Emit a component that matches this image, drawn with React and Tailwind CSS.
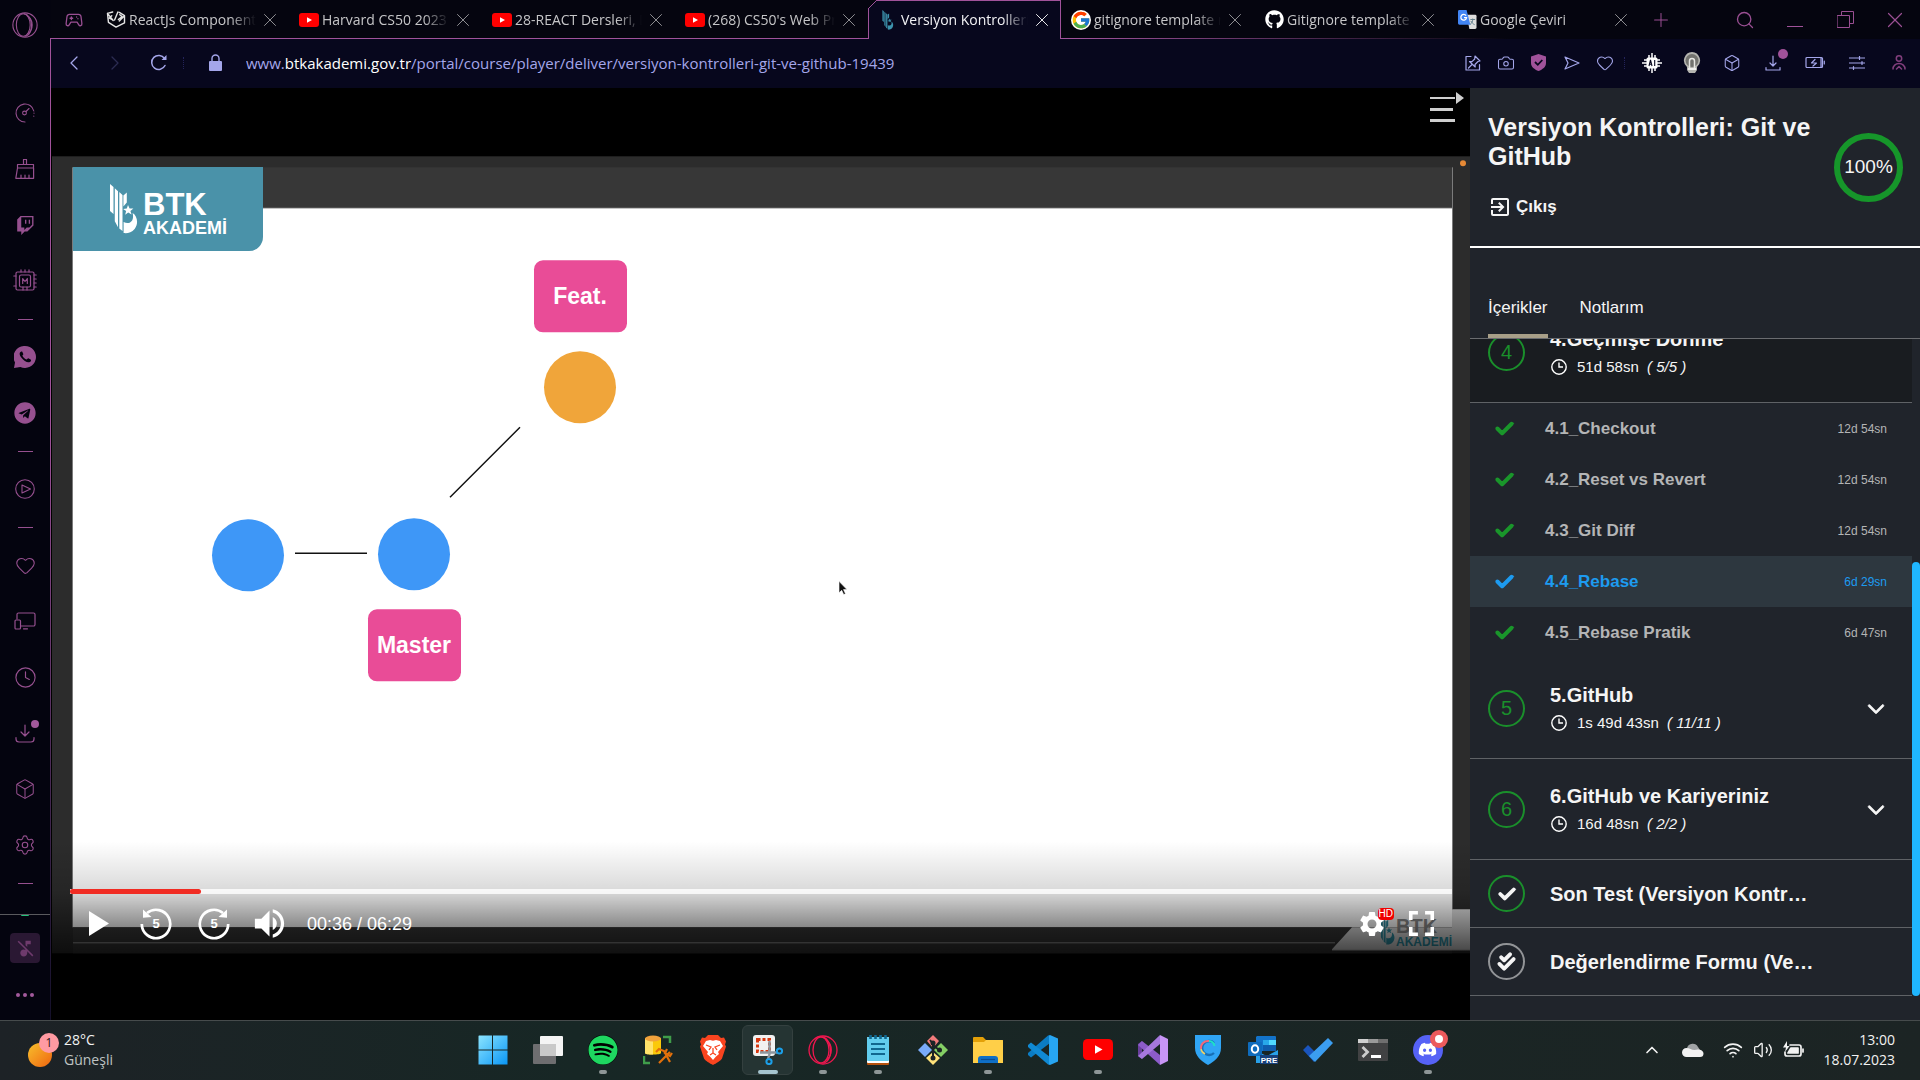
import React from "react";
import { Search, Heart, Clock, Box, Settings, Camera, SendHorizontal, X, Plus, ChevronLeft, ChevronRight, ChevronUp, Wifi, Volume2 } from "lucide-react";
import { FaSpotify, FaTelegram, FaGithub, FaDiscord } from "react-icons/fa";
import { FaCheck, FaCheckDouble, FaChevronDown } from "react-icons/fa6";
import { FcGoogle } from "react-icons/fc";
import { BsTwitch } from "react-icons/bs";
import { MdVolumeUp, MdSettings, MdFullscreen, MdExitToApp, MdMusicOff } from "react-icons/md";

const line = { fill: "none", stroke: "currentColor", strokeLinecap: "round", strokeLinejoin: "round" };

/* ---------- shared marks ---------- */

function YoutubeMark({ className }) {
  return (
    <svg viewBox="0 0 30 21" className={className} aria-hidden="true">
      <rect width="30" height="21" rx="4.5" fill="#ff0000" />
      <path d="M12 6.2v8.6l7.5-4.3z" fill="#fff" />
    </svg>
  );
}

function OperaMark({ className }) {
  return (
    <svg viewBox="0 0 30 30" className={className} {...line} strokeWidth="1.3" aria-hidden="true">
      <circle cx="15" cy="15" r="14" />
      <ellipse cx="13" cy="15" rx="8" ry="13" />
      <path d="M18 5c7 4 7 16 0 20" />
      <path d="M14 2c10 1 12 23 2 26" />
    </svg>
  );
}

function BirdMark({ className }) {
  return (
    <svg viewBox="0 0 28 50" className={className} fill="currentColor" aria-hidden="true">
      <path d="M0 0l3.500 3v27L0 27zM4.800 4.200l3.200 3v36l-3.200-6zM9.300 8l3.200 3v36l-3.200-2.600zM13.400 11.500l3.400-3v10l-3.400 4z" />
      <path d="M18 21l1.600 3.400 3.800.2-3 2.300 1.200 3.700-3.400-2-3 2.200.9-3.700-3-2.200 3.700-.3z" />
      <path d="M13.600 38c6 3 11-1 9-9 5 3 6 11 2 16-3 4-8 4.500-11 4z" />
    </svg>
  );
}

/* ---------- browser sidebar ---------- */

function GaugeIcon() {
  return (
    <svg viewBox="0 0 20 20" className="size-5" {...line} strokeWidth="1.100">
      <path d="M10 19a9 9 0 1 1 8.800-11" />
      <path d="M19 10v.2M18.800 13v.2" />
      <circle cx="9.500" cy="10" r="1.900" />
      <path d="M11 8.500l3-3" />
    </svg>
  );
}
function BrushIcon() {
  return (
    <svg viewBox="0 0 20 20" className="size-5" {...line} strokeWidth="1.200">
      <path d="M8.500 5.500v-5h3v5M2.500 5.500h16v3.500h-16zM2.500 9L.800 19.300h17.800V9M6 19v-3M10 19v-3M14 19v-3" />
    </svg>
  );
}
function CpuIcon() {
  return (
    <svg viewBox="0 0 24 24" className="size-6" {...line} strokeWidth="1.200">
      <rect x="3" y="3" width="18" height="18" rx="1.500" />
      <rect x="6.500" y="6" width="11" height="12" rx="1.500" />
      <path d="M9.700 14.500v-5l2.300 3 2.300-3v5M8 .8V3M12 .8V3M16 .8V3M21 6h2.200M21 10h2.200M21 14h2.200M21 18h2.200M.8 7H3M.8 17H3M10 18v3M14 18v3" />
    </svg>
  );
}
function WhatsappIcon() {
  return (
    <svg viewBox="0 0 22 22" className="size-[22px]">
      <path d="M11 0a11 11 0 1 1-4.600 21L0 22l1-5.500A11 11 0 0 1 11 0z" fill="currentColor" />
      <path d="M7.300 5.600c-2.400 1-2 3.600.2 6.200 2.300 2.900 5.800 5.300 8.300 4.300 1.600-.7 1.500-2.300.8-2.700l-2.300-1.100c-.5-.2-1.100 1.300-1.700 1.200-1.800-.6-3.400-2.100-4.200-3.800 0-.6 1.100-1 .9-1.700l-.9-2.100c-.2-.4-.8-.4-1.100-.3z" fill="#04040f" />
    </svg>
  );
}
function PlayCircleIcon() {
  return (
    <svg viewBox="0 0 20 20" className="size-5" {...line} strokeWidth="1.100">
      <circle cx="10" cy="10" r="9.300" />
      <path d="M7 6v8l8.500-4z" />
    </svg>
  );
}
function DevicesIcon() {
  return (
    <svg viewBox="0 0 22 18" className="h-[18px] w-[22px]" {...line} strokeWidth="1.200">
      <path d="M3 7V2.500A1.500 1.500 0 0 1 4.500 1h15A1.500 1.500 0 0 1 21 2.500v10a1.500 1.500 0 0 1-1.500 1.500H7M9.500 16.800h4" />
      <rect x="1" y="8" width="5.500" height="9" rx="1" />
    </svg>
  );
}
function DownloadIcon() {
  return (
    <svg viewBox="0 0 20 20" className="size-5" {...line} strokeWidth="1.200">
      <path d="M10 2v11M6 9l4 4 4-4M1 14.500v1.500a3 3 0 0 0 3 3h12a3 3 0 0 0 3-3v-1.500" />
    </svg>
  );
}

const railItems = [
  ["Performans", <GaugeIcon />],
  ["GX Cleaner", <BrushIcon />],
  ["Twitch", <BsTwitch className="size-[19px]" />],
  ["GX Control", <CpuIcon />],
  null,
  ["WhatsApp", <WhatsappIcon />],
  ["Telegram", <FaTelegram className="size-[22px]" />],
  null,
  ["Oynatıcı", <PlayCircleIcon />],
  null,
  ["Favoriler", <Heart className="size-[21px]" strokeWidth={1.2} />],
  ["Cihazlar", <DevicesIcon />],
  ["Geçmiş", <Clock className="size-[23px]" strokeWidth={1.2} />],
  ["İndirilenler", <DownloadIcon />, true],
  ["Uzantılar", <Box className="size-[22px]" strokeWidth={1.1} />],
  ["Ayarlar", <Settings className="size-[22px]" strokeWidth={1.2} />],
  null,
];

function Rail() {
  return (
    <aside className="flex w-[51px] shrink-0 bg-[#04040f] text-[#96508f]">
      <div className="flex min-w-0 flex-1 flex-col">
        <button aria-label="Opera menüsü" className="flex h-[50px] shrink-0 items-center justify-center">
          <OperaMark className="size-[26px]" />
        </button>
        <nav className="mt-[35px] flex flex-col">
          {railItems.map((item, i) =>
            item ? (
              <button key={i} aria-label={item[0]} className="relative flex h-14 items-center justify-center">
                {item[1]}
                {item[2] && <span className="absolute top-[15px] right-[11px] size-2 rounded-full bg-[#a35a9c]" />}
              </button>
            ) : (
              <span key={i} className="flex h-5 items-center justify-center">
                <span className="h-px w-[15px] bg-[#96508f]" />
              </span>
            )
          )}
        </nav>
        <div className="mt-[21px] flex justify-center border-t border-[#5a5a5e]">
          <span className="h-px w-2 rounded-b bg-[#22c07a]" />
        </div>
        <div className="flex flex-col items-center gap-[18px] pt-[17px]">
          <button aria-label="Müzik kapalı" className="flex size-[30px] items-center justify-center rounded bg-[#2a1833] text-[#6e3a6c]">
            <MdMusicOff className="size-[21px]" />
          </button>
          <button aria-label="Diğer" className="flex h-7 items-center gap-[3px]">
            <span className="size-1 rounded-full bg-[#a35a9c]" />
            <span className="size-1 rounded-full bg-[#a35a9c]" />
            <span className="size-1 rounded-full bg-[#a35a9c]" />
          </button>
        </div>
      </div>
      <div className="mt-[38px] w-px bg-linear-to-b from-[#a0529a] from-40% to-[#14102a]" />
    </aside>
  );
}

/* ---------- tab strip ---------- */

function CodeCubeIcon() {
  return (
    <svg viewBox="0 0 20 18" className="h-[17px] w-5 text-neutral-200" {...line} strokeWidth="1.500">
      <path d="M6.500 1L1 2.500l1 9.500 8 5 9-4.500V5l-5.500-3.500M1 2.500L7 10M19 5l-5.500 5.500M12 1L8.500 9.500M5.500 5L3 7.500l3.500 2M14 4l2.500 2-4 3" />
    </svg>
  );
}
function TranslateIcon() {
  return (
    <svg viewBox="0 0 20 20" className="size-[19px]">
      <path d="M9 5h9a1.500 1.500 0 0 1 1.500 1.500v12A1.500 1.500 0 0 1 18 20h-6z" fill="#dedede" />
      <path d="M13 10h5M15.500 9v1c0 2-1 4-3 5.500M13.500 11.500c.8 1.500 2 3 4 4" stroke="#607d8b" fill="none" />
      <path d="M1.500 0H9l4 15.500H1.500A1.500 1.500 0 0 1 0 14V1.500A1.500 1.500 0 0 1 1.500 0z" fill="#4285f4" />
      <path d="M8.500 6A3 3 0 1 0 9 8H6.300" stroke="#fff" strokeWidth="1.300" fill="none" />
    </svg>
  );
}

const yt = <YoutubeMark className="h-[14px] w-5" />;
const tabs = [
  [<CodeCubeIcon />, "ReactJs Component"],
  [yt, "Harvard CS50 2023 -"],
  [yt, "28-REACT Dersleri, D"],
  [yt, "(268) CS50's Web Pr"],
  [<BirdMark className="h-5 w-3 text-[#3d93ad]" />, "Versiyon Kontrolleri:"],
  [<FcGoogle className="size-5 rounded-full bg-white" />, "gitignore template r"],
  [<FaGithub className="size-[19px] text-white" />, "Gitignore template r"],
  [<TranslateIcon />, "Google Çeviri"],
];

function TabStrip() {
  return (
    <header className="relative flex h-[39px] shrink-0 bg-[#05050f] text-[#9a4f93]">
      <div className="absolute inset-x-0 bottom-0 h-px bg-linear-to-r from-[#a0529a] from-55% to-transparent to-78%" />
      <button aria-label="GX Corner" className="flex w-[45px] shrink-0 items-center justify-center">
        <svg viewBox="0 0 20 16" className="h-[14px] w-[18px]" {...line} strokeWidth="1.500">
          <path d="M5 1.500h10a3 3 0 0 1 3 2.500l1 8c.2 3-2.500 3.200-3.500 1.500L13.500 10.500h-7L4.500 13.500C3.500 15.200.8 15 1 12l1-8a3 3 0 0 1 3-2.500zM7 4.500v3M5.500 6h3M13 4.500v.2M14.500 6.500v.2" />
        </svg>
      </button>
      <div role="tablist" className="flex min-w-0">
        {tabs.map(([icon, label], i) => {
          const active = i === 4;
          return (
            <div
              key={label}
              className={
                active
                  ? "relative flex w-[193px] items-center border-x border-t border-[#a0529a] bg-[#07071d] pr-[9px] pl-[9px] text-[#f2f2f5]"
                  : "flex w-[193px] items-center px-[10px] text-[#c6c6c8]"
              }
            >
              {active && (
                <svg viewBox="0 0 9 9" className="absolute -top-px -left-px size-[9px]">
                  <path d="M0 0h9L0 9z" fill="#05050f" />
                  <path d="M0 9L9 0" stroke="#a0529a" />
                </svg>
              )}
              <button role="tab" aria-selected={active} className="flex min-w-0 flex-1 items-center gap-[3px]">
                <span className="flex w-5 shrink-0 justify-center">{icon}</span>
                <span className="w-[127px] overflow-hidden mask-r-from-80% text-left text-sm leading-5 whitespace-nowrap">{label}</span>
              </button>
              <button aria-label="Sekmeyi kapat" className={active ? "flex w-[18px] justify-center text-white" : "flex w-[18px] justify-center text-[#9a9a9e]"}>
                <X className="size-[22px] shrink-0" strokeWidth={1} />
              </button>
            </div>
          );
        })}
      </div>
      <button aria-label="Yeni sekme" className="flex w-[42px] shrink-0 items-center justify-center">
        <Plus className="size-[22px]" strokeWidth={1.1} />
      </button>
      <div className="ml-auto flex">
        <button aria-label="Ara" className="flex w-[50px] items-center justify-center">
          <Search className="size-5" strokeWidth={1.6} />
        </button>
        <button aria-label="Küçült" className="flex w-[50px] items-center justify-center">
          <span className="mt-[14px] h-px w-4 bg-[#a0529a]" />
        </button>
        <button aria-label="Geri yükle" className="flex w-[50px] items-center justify-center">
          <svg viewBox="0 0 17 17" className="size-[17px]" {...line} strokeWidth="1">
            <path d="M.5 4.500h12v12H.5zM4.500 4.500v-4h12v12h-4" />
          </svg>
        </button>
        <button aria-label="Kapat" className="flex w-[50px] items-center justify-center">
          <X className="size-[26px]" strokeWidth={1.1} />
        </button>
      </div>
    </header>
  );
}

/* ---------- address bar ---------- */

function PinIcon() {
  return (
    <svg viewBox="0 0 16 16" className="size-4" {...line} strokeWidth="1.200">
      <path d="M6 1.500H1V15h13.500V9.500M10 1l5 5-2 .5-3 3 .2 2.500L4.500 6.500 7 6.600 9.700 4zM7 9.500L3.500 13" />
    </svg>
  );
}
function ShieldIcon() {
  return (
    <svg viewBox="0 0 15 17" className="h-[17px] w-[15px]">
      <path d="M7.500 0L15 2.500V9c0 4-3.500 6.500-7.500 8C3.500 15.500 0 13 0 9V2.500z" fill="#a0529a" />
      <path d="M4 8l2.800 2.800L11.300 6" stroke="#07071d" strokeWidth="1.800" fill="none" />
    </svg>
  );
}
function SendIcon() {
  return (
    <svg viewBox="0 0 16 14" className="h-[14px] w-4" {...line} strokeWidth="1.200">
      <path d="M1 1l14 6-14 6 3-6z" />
    </svg>
  );
}
function AiChipIcon() {
  return (
    <svg viewBox="0 0 20 20" className="size-5">
      <path d="M10 0v20M7 2v16M13 2v16M0 10h20M2 7h16M2 13h16" stroke="#fff" strokeWidth="1.500" />
      <rect x="4.500" y="4.500" width="11" height="11" rx="1.500" fill="#fff" />
      <path d="M7 13l1.500-6L10 13M7.500 11.300h2M12.700 7v6" stroke="#07071d" fill="none" strokeWidth="1.100" />
    </svg>
  );
}
function BulbIcon() {
  return (
    <svg viewBox="0 0 18 21" className="h-[21px] w-[18px]">
      <path d="M9 0a8.500 8.500 0 0 1 5 15v3l-2 3H6l-2-3v-3A8.500 8.500 0 0 1 9 0z" fill="#b5b5b0" />
      <circle cx="9" cy="8.500" r="6.500" fill="#73736f" />
      <path d="M6.500 16V9a2.500 2.500 0 0 1 5 0v7" fill="none" stroke="#e8e8e4" strokeWidth="1.500" />
      <path d="M5 16h8v2H5z" fill="#efefec" />
    </svg>
  );
}
function TrayDownloadIcon() {
  return (
    <svg viewBox="0 0 16 16" className="size-4" {...line} strokeWidth="1.200">
      <path d="M8 1v10M5 8l3 3 3-3M1 12.500V15h14v-2.500" />
    </svg>
  );
}
function BatteryBoltIcon() {
  return (
    <svg viewBox="0 0 20 12" className="h-[13px] w-5" {...line} strokeWidth="1.200">
      <path d="M2 1h14v10H2a1 1 0 0 1-1-1V2a1 1 0 0 1 1-1zM16 1h.5a1 1 0 0 1 1 1v8a1 1 0 0 1-1 1H16M19.300 4.500v3M10 3L6.500 6.500h5L8 9.500" />
    </svg>
  );
}
function SlidersIcon() {
  return (
    <svg viewBox="0 0 16 14" className="h-[14px] w-4" {...line} strokeWidth="1.200">
      <path d="M0 2h16M0 7h16M0 12h16M10.500.5v3M13 5.500v3M4.500 10.500v3" />
    </svg>
  );
}
function UserIcon() {
  return (
    <svg viewBox="0 0 14 15" className="h-[15px] w-[14px] text-[#823f7d]" {...line} strokeWidth="1.500">
      <circle cx="7" cy="3.500" r="2.700" />
      <path d="M1 14c0-3 2.500-5.500 6-5.500s6 2.500 6 5.500M4.500 14l2.500-2.500L9.500 14" />
    </svg>
  );
}

const pageTools = [
  ["Sabitle", <PinIcon />],
  ["Ekran görüntüsü", <Camera className="size-[18px]" strokeWidth={1.4} />],
  ["Reklam engelleyici", <ShieldIcon />],
  ["Gönder", <SendIcon />],
  ["Beğen", <Heart className="size-[18px]" strokeWidth={1.4} />],
];
const extensions = [
  ["AI", <AiChipIcon />],
  ["Işıkları kapat", <BulbIcon />],
  ["Uzantılar", <Box className="size-[18px]" strokeWidth={1.4} />],
];
const browserTools = [
  ["İndirme", <TrayDownloadIcon />, true],
  ["Pil tasarrufu", <BatteryBoltIcon />],
  ["Kolay kurulum", <SlidersIcon />],
  ["Profil", <UserIcon />],
];

function AddressBar() {
  return (
    <div className="flex h-[49px] shrink-0 items-center bg-[#07071d] pb-[2px] text-[#a4a6ea]">
      <button aria-label="Geri" className="flex w-[46px] justify-center">
        <ChevronLeft className="size-6" strokeWidth={1.3} />
      </button>
      <button aria-label="İleri" className="flex w-9 justify-center text-[#2b2b52]">
        <ChevronRight className="size-6" strokeWidth={1.3} />
      </button>
      <button aria-label="Yenile" className="flex w-[50px] justify-center">
        <svg viewBox="0 0 17 17" className="size-[17px]" {...line} strokeWidth="1.500">
          <path d="M15 11.500a7 7 0 1 1-.5-7" />
          <path d="M16.500 1v5h-5z" fill="currentColor" stroke="none" />
        </svg>
      </button>
      <span className="h-3 w-px border-l border-dotted border-[#23235a]" />
      <button aria-label="Site bilgisi" className="flex w-[62px] justify-center">
        <svg viewBox="0 0 13 17" className="h-[17px] w-[13px]">
          <rect y="7" width="13" height="10" rx="1" fill="currentColor" />
          <path d="M3 7V4.500a3.500 3.500 0 0 1 7 0V7" stroke="currentColor" strokeWidth="1.400" fill="none" />
        </svg>
      </button>
      <button className="min-w-0 flex-1 truncate text-left text-[15px] leading-6">
        www.<span className="text-white">btkakademi.gov.tr</span>/portal/course/player/deliver/versiyon-kontrolleri-git-ve-github-19439
      </button>
      {pageTools.map(([name, icon]) => (
        <button key={name} aria-label={name} className="flex w-[33px] justify-center">
          {icon}
        </button>
      ))}
      <span className="mr-[7px] ml-[3px] h-3 w-px border-l border-dotted border-[#23235a]" />
      {extensions.map(([name, icon]) => (
        <button key={name} aria-label={name} className="flex w-10 justify-center">
          {icon}
        </button>
      ))}
      {browserTools.map(([name, icon, dot]) => (
        <button key={name} aria-label={name} className="relative flex w-[42px] justify-center">
          {icon}
          {dot && <span className="absolute -top-[6px] right-[6px] size-[10px] rounded-full bg-[#a0529a]" />}
        </button>
      ))}
    </div>
  );
}

/* ---------- video ---------- */

function Slide() {
  return (
    <svg viewBox="0 0 1418 797" className="absolute inset-0 size-full" fontFamily="'Liberation Sans', Arial, sans-serif" fontWeight="700">
      <rect width="1418" height="797" fill="#2c2c2c" />
      <rect x="21" y="11" width="1379" height="42" fill="#373737" />
      <rect x="21" y="51" width="1379" height="1" fill="#5a5a5a" />
      <rect x="21" y="52" width="1379" height="719" fill="#fff" />
      <rect x="21" y="771" width="1379" height="26" fill="#363636" />
      <path d="M20.500 11v760M1400.500 11v742" stroke="#7b7b7b" />
      <path d="M21 786.500h1262" stroke="#a0a0a0" />
      <path d="M1280 793l20-22h100v-18h18v40z" fill="#dcdcdc" />
      <path d="M1280 793.500h138" stroke="#fff" />
      <circle cx="1411" cy="7" r="3" fill="#e88a35" />
      <circle cx="196" cy="399" r="36" fill="#3e97f7" />
      <circle cx="362" cy="398" r="36" fill="#3e97f7" />
      <circle cx="528" cy="231" r="36" fill="#f0a53a" />
      <path d="M243 397h72M398 341l70-70" stroke="#111" strokeWidth="1.500" />
      <rect x="482" y="104" width="93" height="72" rx="9" fill="#e94c97" />
      <rect x="316" y="453" width="93" height="72" rx="9" fill="#e94c97" />
      <text x="528" y="148" fontSize="23" fill="#fff" textAnchor="middle">Feat.</text>
      <text x="362" y="497" fontSize="23" fill="#fff" textAnchor="middle">Master</text>
      <path d="M787 425v11.500l2.700-2.500 2 4.300 1.800-.8-2-4.200h3.500z" fill="#111" stroke="#fff" strokeWidth=".6" />
      <svg x="1326" y="757" width="17" height="33" viewBox="0 0 28 50" color="#2d8fa3">
        <BirdMark />
      </svg>
      <text x="1344" y="777" fontSize="20" fill="#8a8a8a">BTK</text>
      <text x="1344" y="790" fontSize="12" fill="#2d8fa3">AKADEMİ</text>
    </svg>
  );
}

function SkipIcon({ forward }) {
  return (
    <svg viewBox="0 0 32 32" className="size-8">
      <g transform={forward ? "translate(32 0) scale(-1 1)" : undefined}>
        <path d="M1.800 16A14.200 14.200 0 1 0 7 5" fill="none" stroke="#fff" strokeWidth="2.700" />
        <path d="M3 1.500l8.500 7.500-8.500.8z" fill="#fff" />
      </g>
      <text x="16" y="20" textAnchor="middle" fontSize="13" fontWeight="700" fontFamily="'Liberation Sans', sans-serif" fill="#fff">5</text>
    </svg>
  );
}

function Player() {
  return (
    <main className="relative flex min-w-0 flex-1 flex-col justify-center bg-black pt-[2px] pl-px">
      <button aria-label="Menüyü gizle" className="absolute top-1 right-[6px]">
        <svg viewBox="0 0 34 30" className="h-[30px] w-[34px]" fill="#cfcfcf">
          <path d="M0 5h25v2H0zM0 16h23v3H0zM0 27h25v3H0zM26 0l8 6-8 6z" />
        </svg>
      </button>
      <section aria-label="Video" className="relative aspect-video w-full font-['Liberation_Sans',Arial,sans-serif] text-white">
        <Slide />
        <div className="absolute top-[11px] left-[21px] flex h-[84px] w-[190px] items-center gap-[5px] rounded-br-[14px] bg-[#4a92a9] pl-[37px] font-bold">
          <BirdMark className="h-[50px] w-[28px]" />
          <div className="pt-[12px]">
            <div className="text-[31px] leading-[26px]">BTK</div>
            <div className="text-[18px] leading-5">AKADEMİ</div>
          </div>
        </div>
        <div className="absolute inset-x-0 bottom-0 bg-linear-to-b from-transparent from-10% via-black/15 via-50% to-black/70 pt-[60px]">
          <div className="relative mx-[18px] h-[5px] bg-white/80">
            <div className="h-full w-[131px] rounded-full bg-[#f12c23]" />
            <input type="range" aria-label="İlerleme" min="0" max="389" defaultValue="36" className="absolute inset-0 size-full cursor-pointer opacity-0" />
          </div>
          <div className="flex h-[60px] items-center pr-[27px] pl-[37px]">
            <button aria-label="Oynat">
              <svg viewBox="0 0 20 25" className="h-[25px] w-5"><path d="M0 0l20 12.500L0 25z" fill="#fff" /></svg>
            </button>
            <button aria-label="5 saniye geri" className="ml-[31px]"><SkipIcon /></button>
            <button aria-label="5 saniye ileri" className="ml-[26px]"><SkipIcon forward /></button>
            <button aria-label="Ses" className="ml-5"><MdVolumeUp className="size-[39px]" /></button>
            <span className="ml-[18px] text-[18px] leading-6">00:36 / 06:29</span>
            <div className="ml-auto flex items-center">
              <button aria-label="Kalite" className="relative">
                <MdSettings className="size-[30px]" />
                <span className="absolute -top-px right-[-7px] flex h-3 items-center rounded-sm bg-[#f00000] px-px text-[10px] leading-3">HD</span>
              </button>
              <button aria-label="Tam ekran" className="ml-[13px]"><MdFullscreen className="size-[43px]" /></button>
            </div>
          </div>
        </div>
      </section>
    </main>
  );
}

/* ---------- course panel ---------- */

const lessons = [
  ["4.1_Checkout", "12d 54sn"],
  ["4.2_Reset vs Revert", "12d 54sn"],
  ["4.3_Git Diff", "12d 54sn"],
  ["4.4_Rebase", "6d 29sn", true],
  ["4.5_Rebase Pratik", "6d 47sn"],
];

function ClockIcon() {
  return (
    <svg viewBox="0 0 16 16" className="size-4" fill="none" stroke="#fff" strokeWidth="1.400">
      <circle cx="8" cy="8" r="7.200" />
      <path d="M8 3.500V8h4" />
    </svg>
  );
}

function Chapter({ n, title, time, count, open }) {
  return (
    <button className={open ? "flex h-[101px] w-full items-center border-b border-[#5f6266] bg-[#191c20] pr-[27px] pl-[18px] text-left" : "flex h-[101px] w-full items-center border-b border-[#5f6266] pr-[27px] pl-[18px] text-left"}>
      <span className="flex size-[37px] shrink-0 items-center justify-center rounded-full border-2 border-[#1a8f2b] text-[20px] leading-5 text-[#1a8f2b]">{n}</span>
      <span className="ml-[25px] flex min-w-0 flex-1 flex-col gap-1 pt-px">
        <span className="text-[20px] leading-6 font-bold">{title}</span>
        <span className="flex items-center gap-[10px] pl-px text-[15px] leading-6">
          <ClockIcon />
          <span>{time}&nbsp; <i>( {count} )</i></span>
        </span>
      </span>
      {!open && <FaChevronDown className="size-[18px] shrink-0 stroke-current stroke-[20px]" />}
    </button>
  );
}

function CoursePanel() {
  return (
    <aside className="flex w-[450px] shrink-0 flex-col overflow-hidden bg-[#20242b] font-['Liberation_Sans',Arial,sans-serif] text-[#f5f5f5]">
      <div className="flex shrink-0 justify-between border-b-2 border-white pt-[25px] pr-[17px] pb-[27px] pl-[18px]">
        <div>
          <h1 className="w-[330px] text-[25px] leading-[29px] font-bold">Versiyon Kontrolleri: Git ve GitHub</h1>
          <a href="#cikis" className="mt-6 flex items-center gap-1 text-[17px] leading-6 font-bold">
            <MdExitToApp className="size-6" />
            Çıkış
          </a>
        </div>
        <div className="mt-5 flex size-[69px] items-center justify-center rounded-full border-[6px] border-[#16962a] text-[19px]">100%</div>
      </div>
      <div role="tablist" className="flex shrink-0 gap-8 border-b border-[#6a6c70] pt-11 pl-[18px] text-[17px] leading-8">
        <button role="tab" aria-selected="true" className="border-b-4 border-[#a89f88] pb-[10px]">İçerikler</button>
        <button role="tab" aria-selected="false" className="border-b-4 border-transparent pb-[10px]">Notlarım</button>
      </div>
      <div className="flex min-h-0 flex-1 overflow-hidden">
        <div className="-mt-[37px] min-w-0 flex-1">
          <Chapter n={4} title="4.Geçmişe Dönme" time="51d 58sn" count="5/5" open />
          {lessons.map(([name, time, current]) => (
            <a
              key={name}
              href="#ders"
              className={current ? "flex h-[51px] items-center bg-[#2d373f] px-[25px] text-[#1d9bf0]" : "flex h-[51px] items-center px-[25px] text-[#b4b5b6]"}
            >
              <FaCheck className={current ? "size-[19px] overflow-visible stroke-current stroke-[44px]" : "size-[19px] overflow-visible stroke-current stroke-[44px] text-[#1a962b]"} />
              <span className="ml-[31px] flex-1 text-[17px] leading-6 font-bold">{name}</span>
              <span className="text-xs">{time}</span>
            </a>
          ))}
          <Chapter n={5} title="5.GitHub" time="1s 49d 43sn" count="11/11" />
          <Chapter n={6} title="6.GitHub ve Kariyeriniz" time="16d 48sn" count="2/2" />
          <a href="#test" className="flex h-[68px] items-center border-b border-[#5f6266] pl-[18px]">
            <span className="flex size-[37px] items-center justify-center rounded-full border-2 border-[#1a8f2b]">
              <FaCheck className="size-[18px] overflow-visible stroke-current stroke-[44px]" />
            </span>
            <span className="ml-[25px] text-[20px] leading-6 font-bold">Son Test (Versiyon Kontr…</span>
          </a>
          <a href="#form" className="flex h-[68px] items-center border-b border-[#5f6266] pl-[18px]">
            <span className="flex size-[37px] items-center justify-center rounded-full border-2 border-[#929497]">
              <FaCheckDouble className="size-[19px] overflow-visible stroke-current stroke-[40px]" />
            </span>
            <span className="ml-[25px] text-[20px] leading-6 font-bold">Değerlendirme Formu (Ve…</span>
          </a>
        </div>
        <div className="flex w-2 flex-col justify-end pb-6">
          <div className="h-[66%] rounded-full bg-[#1fb6ff]" />
        </div>
      </div>
    </aside>
  );
}

/* ---------- taskbar ---------- */

const big = "size-[30px]";
const apps = [
  ["Başlat", <svg viewBox="0 0 30 30" className={big}><defs><linearGradient id="win" x1="0" y1="0" x2="1" y2="1"><stop stopColor="#8be4ff" /><stop offset="1" stopColor="#0a96f5" /></linearGradient></defs><path d="M1 .5h13v14H.5V1zM15 .5h14.500v14H15zM.5 15.500H14v14H.5zM15 15.500h14.500v14H15z" fill="url(#win)" /></svg>],
  ["Görev görünümü", <svg viewBox="0 0 30 30" className={big}><rect y="9" width="23" height="20" rx="1" fill="#6e6e70" /><rect x="7" y="1" width="23" height="20" rx="1" fill="#f4f4f4" /><rect x="7" y="9" width="16" height="12" fill="#c9c9c9" /></svg>],
  ["Spotify", <span className="flex size-[30px] items-center justify-center rounded-full bg-black"><FaSpotify className="size-[30px] text-[#1ed760]" /></span>, 1],
  ["SQL", <svg viewBox="0 0 30 30" className={big}><path d="M2 3v15c0 2 16 2 16 0V3z" fill="#fbc90a" /><path d="M2 4v14c0 1 3 1.500 8 1.500V5z" fill="#ffe36b" /><ellipse cx="10" cy="3.500" rx="8" ry="3" fill="#f0a23c" /><path d="M20 2h7v6M1 21v7h6" stroke="#3f9d4a" strokeWidth="2.500" fill="none" /><path d="M13 17l3-3 5 2 6 11M16 28l11-11M24 14l-2 4 5 3 2-3" stroke="#e2700b" strokeWidth="2.200" fill="none" /></svg>],
  ["Brave", <svg viewBox="0 0 26 30" className="h-[30px] w-[26px]"><path d="M8 0h10l3 3 3-.5 2 4-1 3 1 2-4 12c-1 2-6 5-9 6.500-3-1.500-8-4.500-9-6.500L0 11.500l1-2-1-3 2-4L5 3z" fill="#f9441f" /><path d="M6 6l4-1 3 .7L16 5l4 1 3 5-5 6 1 2-3 2.500-3 3.500-3-3.500L7 19l1-2-5-6z" fill="#fff" /><path d="M6 10l5 2-2 3M20 10l-5 2 2 3M13 13v5l-3 2M13 18l3 2" stroke="#f9441f" strokeWidth="1.300" fill="none" /></svg>],
  ["Ekran Alıntısı Aracı", <svg viewBox="0 0 30 30" className={big}><rect width="22" height="21" rx="3" fill="#f1f1f1" /><rect x="4.500" y="4.500" width="12" height="12" fill="none" stroke="#d8360e" strokeWidth="3" strokeDasharray="3 2" /><path d="M16.500 6v13l-1.500 5M7 17.500h17" stroke="#8d979f" strokeWidth="2.400" fill="none" /><circle cx="26.500" cy="16" r="2.600" fill="none" stroke="#1c9fe8" strokeWidth="2" /><circle cx="16" cy="26.500" r="2.600" fill="none" stroke="#1c9fe8" strokeWidth="2" /></svg>, 2],
  ["Opera GX", <OperaMark className="size-[30px] text-[#f0174f]" />, 1],
  ["Not Defteri", <svg viewBox="0 0 22 30" className="h-[30px] w-[22px]"><rect y="26" width="22" height="4" rx="1" fill="#b6520e" /><rect y="2" width="22" height="26" rx="1" fill="#fff" /><rect y="2" width="22" height="24" rx="1" fill="#62cdee" /><path d="M4 9h14M4 14h14M4 19h14" stroke="#11678f" strokeWidth="1.800" /><path d="M3.500 0v4M8.500 0v4M13.500 0v4M18.500 0v4" stroke="#11678f" strokeWidth="2.600" /></svg>, 1],
  ["Git", <svg viewBox="0 0 30 30" className={big}><path d="M15 0l6 6-6 7-6-7z" fill="#f27b7b" /><path d="M23 8l7 7-7 7-7-7z" fill="#84cf65" /><path d="M15 17l7 6-7 7-7-7z" fill="#ffe27a" /><path d="M7 8l7 7-7 7-7-7z" fill="#7aabfa" /><path d="M12 5l3 4v14M15 10l6 5" stroke="#1c2326" strokeWidth="2" fill="none" /><circle cx="15" cy="8" r="2.500" fill="#1c2326" /><circle cx="15" cy="23" r="2.500" fill="#1c2326" /><circle cx="21.500" cy="15" r="2.500" fill="#1c2326" /></svg>],
  ["Dosya Gezgini", <svg viewBox="0 0 30 28" className="h-7 w-[30px]"><path d="M0 2a1 1 0 0 1 1-1h9l3 3h17v8H0z" fill="#e3a008" /><path d="M0 6h11l2-2h16a1 1 0 0 1 1 1v22H0z" fill="#ffcf48" /><path d="M5 27v-4a3 3 0 0 1 3-3h14a3 3 0 0 1 3 3v4z" fill="#0f6fc6" /><path d="M8 23.500h14" stroke="#0a4c92" strokeWidth="1.200" /></svg>, 1],
  ["Visual Studio Code", <svg viewBox="0 0 30 30" className={big}><path d="M22 0v8L3 22.500 0 20v-2L20 .5z" fill="#0b7cc4" /><path d="M0 10l3-2.500L22 22v8l-2-.5L0 12z" fill="#1089d3" /><path d="M22 0l8 3.500v23L22 30l-1-1V1z" fill="#27a5f2" /></svg>],
  ["YouTube", <YoutubeMark className="h-[21px] w-[30px]" />, 1],
  ["Visual Studio", <svg viewBox="0 0 30 30" className={big}><path d="M0 9l4-3v18l-4-3z" fill="#6a3f9c" /><path d="M4 6l18 14v10L0 10z" fill="#8c5cc9" /><path d="M22 0v9L4 24l-4-3z" fill="#a678dd" /><path d="M22 0l8 4v22l-8 4z" fill="#c895f6" /></svg>],
  ["Hotspot Shield", <svg viewBox="0 0 26 30" className="h-[30px] w-[26px]"><path d="M0 0h26v13c0 8-6 13-13 17C6 26 0 21 0 13z" fill="#30a5f5" /><path d="M19 18a7 7 0 1 1 0-10" stroke="#176fb5" strokeWidth="2.400" fill="none" /><path d="M6 14a7 7 0 0 1 8-8" stroke="#f06a7c" strokeWidth="2" fill="none" /><path d="M14 6a6 6 0 0 1 5.500 5" stroke="#1fe0c8" strokeWidth="2" fill="none" /><path d="M6 14a7 7 0 0 0 4 5" stroke="#ead26a" strokeWidth="1.500" fill="none" /></svg>],
  ["Outlook", <svg viewBox="0 0 30 28" className="h-7 w-[30px]"><path d="M9 0h18a1 1 0 0 1 1 1v14H8V1z" fill="#1373c9" /><path d="M15 4h6v5h-6z" fill="#28a8ea" /><path d="M21 4h7v5h-7z" fill="#50d9ff" /><path d="M15 9h13v6H15z" fill="#0f5cad" /><path d="M8 15l11 5 11-6v13H8z" fill="#28a0e8" /><rect y="6" width="14" height="14" rx="1" fill="#0f6cbd" /><ellipse cx="7" cy="13" rx="3.200" ry="3.700" fill="none" stroke="#fff" strokeWidth="2" /><rect x="12" y="19" width="18" height="9" fill="#173f7a" /><text x="21" y="26.500" textAnchor="middle" fontSize="8" fontWeight="700" fontFamily="'Liberation Sans', sans-serif" fill="#fff">PRE</text></svg>],
  ["Yapılacaklar", <svg viewBox="0 0 30 26" className="h-[26px] w-[30px]"><path d="M0 13l5-5 9 9-3 8z" fill="#1a55bd" /><path d="M25 1l5 5-18 19-6-6z" fill="#3b9df0" /></svg>],
  ["Terminal", <svg viewBox="0 0 30 22" className="h-[22px] w-[30px]"><rect width="30" height="22" rx="1" fill="#414243" /><path d="M0 0h10v4H0z" fill="#d0d0d0" /><path d="M10 0h10v4H10z" fill="#9a9a9a" /><path d="M20 0h10v4H20z" fill="#6f6f6f" /><path d="M4.500 8l5 5-5 5" stroke="#ccc" strokeWidth="2.800" fill="none" /><path d="M13 17.500h10" stroke="#fff" strokeWidth="3" /></svg>],
  ["Discord", <span className="relative flex size-[30px] items-center justify-center rounded-full bg-[#5662f6] text-white"><FaDiscord className="size-[19px]" /><span className="absolute -top-[5px] -right-[5px] flex size-[18px] items-center justify-center rounded-full bg-[#ec5a5c]"><span className="size-2 rounded-full bg-white" /></span></span>, 1],
];

function Taskbar() {
  return (
    <footer className="grid h-[60px] shrink-0 grid-cols-[1fr_auto_1fr] border-t border-[#464b4c] bg-linear-to-r from-[#1d2226] via-[#172725] via-30% to-[#1c2424] pb-[2px] text-[#f2f2f2]">
      <button className="flex items-center gap-[5px] pl-7 text-left">
        <span className="relative flex h-[34px] w-[31px] items-end">
          <span className="size-6 rounded-full bg-linear-to-br from-[#f5bf2c] to-[#ee6210]" />
          <span className="absolute top-0 right-0 flex size-5 items-center justify-center rounded-full bg-[#ff9aa2] text-xs text-[#2b1517]">1</span>
        </span>
        <span className="flex flex-col text-sm leading-5">
          <span>28°C</span>
          <span className="text-[#bfc3c3]">Güneşli</span>
        </span>
      </button>
      <div className="flex">
        {apps.map(([name, icon, run]) => (
          <button key={name} aria-label={name} className="relative flex w-[55px] items-center justify-center">
            {run === 2 && <span className="absolute inset-x-[2px] top-1 bottom-[3px] rounded-md border border-[#34403f] bg-[#253433]" />}
            <span className="relative flex">{icon}</span>
            {run === 1 && <span className="absolute bottom-[4px] h-1 w-2 rounded-full bg-[#8e9697]" />}
            {run === 2 && <span className="absolute bottom-[4px] h-1 w-5 rounded-full bg-[#a6c5cf]" />}
          </button>
        ))}
      </div>
      <div className="flex items-center justify-end pr-[25px]">
        <button aria-label="Gizli simgeler" className="mr-[20px]"><ChevronUp className="size-5" strokeWidth={2} /></button>
        <button aria-label="OneDrive" className="mr-[19px]">
          <svg viewBox="0 0 22 14" className="h-[14px] w-[22px]"><path d="M5 5a6 6 0 0 1 11-1l2 3-8 6z" fill="#a0a3a5" /><path d="M4.500 14a4.500 4.500 0 0 1 0-9c3 0 5 2 8 2 4-1.500 9 0 9 3.500A3.500 3.500 0 0 1 18 14z" fill="#f2f2f2" /></svg>
        </button>
        <button aria-label="Ağ, ses ve pil" className="flex items-center gap-[10px]">
          <Wifi className="size-5" strokeWidth={2} />
          <Volume2 className="size-5" strokeWidth={1.6} />
          <svg viewBox="0 0 21 17" className="h-[17px] w-[21px]" {...line} strokeWidth="1.700">
            <path d="M7 4h9a2 2 0 0 1 2 2v7a2 2 0 0 1-2 2H4a2 2 0 0 1-2-2v-2M20 8v3" />
            <path d="M8 7h7v5H5z" fill="currentColor" />
            <path d="M4 0L0 6.500h3L2 11l4.500-6H4z" fill="currentColor" stroke="none" />
          </svg>
        </button>
        <button className="ml-[20px] text-right text-sm leading-5">
          <span className="block">13:00</span>
          <span className="block">18.07.2023</span>
        </button>
      </div>
    </footer>
  );
}

export default function App() {
  return (
    <div className="flex h-screen flex-col overflow-hidden bg-black font-['Open_Sans','Noto_Sans',sans-serif]">
      <div className="flex min-h-0 flex-1">
        <Rail />
        <div className="flex min-w-0 flex-1 flex-col">
          <TabStrip />
          <AddressBar />
          <div className="flex min-h-0 flex-1">
            <Player />
            <CoursePanel />
          </div>
        </div>
      </div>
      <Taskbar />
    </div>
  );
}
